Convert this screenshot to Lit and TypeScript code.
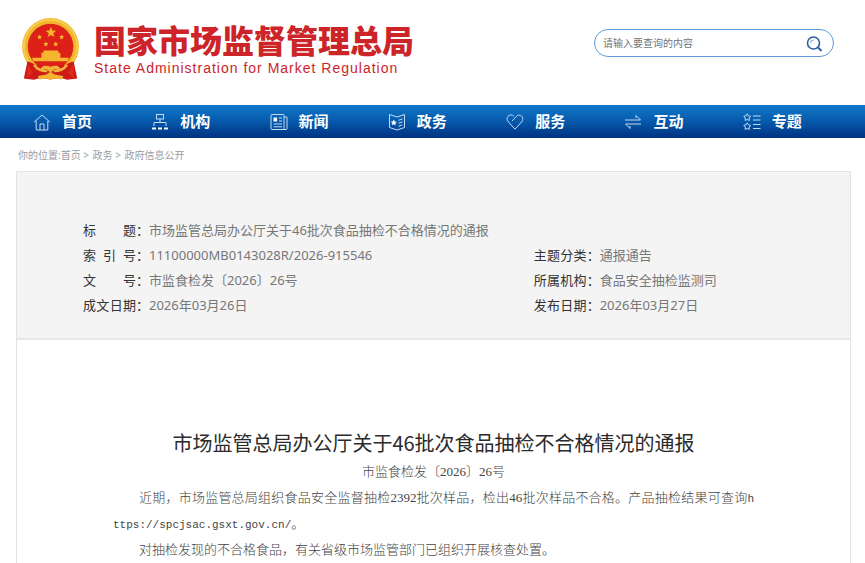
import { LitElement, html, css, svg, SVGTemplateResult } from "lit";
import { customElement, property } from "lit/decorators.js";

const star = svg`<path id="star" d="m4.200.8 1.200 2 2.200.5-1.500 1.800.2 2.300-2.100-.9-2.100.9.200-2.300L.800 3.300l2.200-.5z"/>`;

const icons: Record<string, SVGTemplateResult> = {
  home: svg`<path d="M1 9.2 9 2l8 7.2"/><path d="M3.2 8v9h11.6V8"/><path d="M7 17v-6h4v6"/>`,
  org: svg`<rect x="5.5" y="1.5" width="7" height="4.5"/><path d="M9 6v3.5M3 13V9.5h12V13"/><path d="M1 15.5h4M7 15.5h4M13 15.5h4" stroke="#fff" stroke-width="2"/>`,
  news: svg`<rect x="1" y="1.500" width="13" height="15" rx="1"/><path d="M14 4h3v11.500a1 1 0 0 1-1 1h-3"/><path d="M9 5h3M9 8h3M3.500 11h8.500M3.500 13.800h8.500"/><rect x="4" y="5" width="2.600" height="3" fill="#fff" stroke="#fff"/>`,
  policy: svg`<path d="M1.500 1.500 9 4l7.500-2.500v13L9 17l-7.500-2.500z"/><path d="m10.500 7.300 4-1.400M10.500 10.300l4-1.400M10.500 13.300l4-1.400"/><path d="m5.800 7 .8 1.700 1.800.2-1.300 1.200.3 1.800-1.600-.9-1.600.9.3-1.800-1.300-1.200 1.800-.2z" fill="#fff" stroke="#fff" stroke-width=".5"/>`,
  heart: svg`<path d="M6 8 9.800 4c2-2.600 5-2.200 6.300-.2 1.200 1.900.7 3.800-.6 5.200L9 16.200 2.400 9C.8 7.300.6 5 2 3.300c1.600-1.900 4.300-1.800 5.800-.2"/>`,
  exchange: svg`<path d="M1 7h15.500L12 2.500V5M17 11H1.500L6 15.500V13"/>`,
  topics: svg`${star}<g transform="translate(0 9)">${star}</g><path d="M10 3h7.500M10 7h7.500M10 11.500h7.500M10 15.500h7.500"/>`,
};

@customElement("nav-icon")
class NavIcon extends LitElement {
  @property() name = "home";
  static styles = css`
    :host { display: flex; color: #c3dcf5; }
    svg { width: 18px; height: 18px; fill: none; stroke: currentColor; stroke-width: 1; }
  `;
  render() {
    return html`<svg viewBox="0 0 18 18" aria-hidden="true">${icons[this.name]}</svg>`;
  }
}

@customElement("site-header")
class SiteHeader extends LitElement {
  static styles = css`
    :host {
      display: flex;
      align-items: flex-start;
      justify-content: space-between;
      padding: 17px 31px 0 20px;
      height: 88px;
    }
    .brand { display: flex; gap: 14px; color: #cd2429; text-decoration: none; }
    .emblem { width: 60px; height: 65px; flex: none; }
    .name {
      display: block;
      padding-top: 7px;
      font-size: 32px;
      line-height: 34px;
      font-weight: 900;
      white-space: nowrap;
    }
    .english {
      display: block;
      font: 14px/20px "Liberation Sans", Arial, sans-serif;
      letter-spacing: 1px;
      white-space: nowrap;
    }
    .search {
      display: flex;
      align-items: center;
      box-sizing: border-box;
      width: 240px;
      height: 28px;
      margin-top: 12px;
      padding: 0 8px;
      border: 1px solid #5c9bd6;
      border-radius: 14px;
    }
    input {
      flex: 1;
      min-width: 0;
      padding: 0;
      border: 0;
      outline: 0;
      background: none;
      font: inherit;
      font-size: 10px;
      color: #333;
    }
    input::placeholder { color: #757575; }
    button { display: flex; padding: 2px; border: 0; background: none; cursor: pointer; }
    .lens { width: 17px; height: 17px; fill: none; stroke: #2b5f9e; }
  `;
  render() {
    return html`
      <a class="brand" href="#">
        <svg class="emblem" viewBox="16 20 171 185" aria-hidden="true">
          <circle cx="103" cy="104" r="81" fill="#f0b62c" />
          <circle cx="103" cy="104" r="76" fill="none" stroke="#f9ce50" stroke-width="5" />
          <circle cx="103" cy="104" r="65" fill="#dd2119" />
          <g fill="#f6b52f">
            <path d="m104 48 4 10 11 1-8 7 3 11-10-6-9 6 3-11-9-7 11-1z" />
            <path d="m72 70 2 4 5 1-4 3 1 5-4-2-5 2 1-5-3-3 5-1zM135 70l2 4 5 1-4 3 1 5-4-2-5 2 1-5-3-3 5-1zM90 90l2 4 5 1-4 3 1 5-4-2-5 2 1-5-3-3 5-1zM118 90l2 4 5 1-4 3 1 5-4-2-5 2 1-5-3-3 5-1z" />
            <path d="M83 115h42v7h6v14H77v-14h6zM50 136h106l-4 10H54z" />
          </g>
          <path d="M37 147c15 2 21 12 37 11l29 11 29-11c16 1 22-9 37-11l10 48-29 4-19-6-28 5-28-5-19 6-29-4z" fill="#cd1a16" />
          <path d="M75 173c0-16 14-17 28-11 14-6 28-5 28 11l-16-5-12 11-12-11z" fill="#f2b13a" />
          <path d="M56 156c9 14 25 18 38 18M150 156c-9 14-25 18-38 18" fill="none" stroke="#efb439" stroke-width="7" />
          <path d="m67 188 24-4 12-8 12 8 24 4-4 10-19-3-13 4-13-4-19 3z" fill="#f5b330" />
          <path d="m38 154-2 40 17-15zM168 154l2 40-17-15z" fill="#e02a1d" />
        </svg>
        <span>
          <span class="name">国家市场监督管理总局</span>
          <span class="english">State Administration for Market Regulation</span>
        </span>
      </a>
      <form class="search" role="search" @submit=${(e: Event) => e.preventDefault()}>
        <input type="text" placeholder="请输入要查询的内容" aria-label="请输入要查询的内容" />
        <button aria-label="搜索">
          <svg class="lens" viewBox="0 0 17 17" aria-hidden="true">
            <circle cx="7.500" cy="8" r="6" stroke-width="1.600" />
            <path d="M4.500 8a3 3 0 0 1 3-3" stroke="#6d9dcb" />
            <path d="m12 12.500 3.500 3.500" stroke-width="2" />
          </svg>
        </button>
      </form>
    `;
  }
}

@customElement("main-nav")
class MainNav extends LitElement {
  private items = [
    ["home", "首页"],
    ["org", "机构"],
    ["news", "新闻"],
    ["policy", "政务"],
    ["heart", "服务"],
    ["exchange", "互动"],
    ["topics", "专题"],
  ];
  static styles = css`
    :host { display: block; }
    nav {
      display: grid;
      grid-template-columns: repeat(7, 1fr);
      padding: 0 4px 0 33px;
      background: linear-gradient(#1279ca, #0659ab 50%, #003282);
    }
    a {
      display: flex;
      align-items: center;
      gap: 11px;
      color: #fff;
      font-size: 15px;
      font-weight: 700;
      line-height: 33px;
      text-decoration: none;
    }
  `;
  render() {
    return html`<nav>
      ${this.items.map(([icon, text]) => html`<a href="#"><nav-icon name=${icon}></nav-icon>${text}</a>`)}
    </nav>`;
  }
}

@customElement("doc-meta")
class DocMeta extends LitElement {
  private rows = [
    ["标 题", "市场监管总局办公厅关于46批次食品抽检不合格情况的通报", "wide"],
    ["索 引 号", "11100000MB0143028R/2026-915546", ""],
    ["主题分类", "通报通告", ""],
    ["文 号", "市监食检发〔2026〕26号", ""],
    ["所属机构", "食品安全抽检监测司", ""],
    ["成文日期", "2026年03月26日", ""],
    ["发布日期", "2026年03月27日", ""],
  ];
  static styles = css`
    :host { display: block; background: #f4f4f4; border-bottom: 2px solid #e6e6e6; }
    dl {
      display: grid;
      grid-template-columns: 9fr 5fr;
      margin: 0;
      padding: 46px 66px 20px;
      font-size: 13px;
      line-height: 25px;
    }
    .row { display: flex; }
    .wide { grid-column: 1 / -1; }
    dt { display: flex; width: 66px; flex: none; color: #333; }
    .label { width: 53px; text-align: justify; text-align-last: justify; }
    dd { margin: 0; color: #777; }
  `;
  render() {
    return html`<dl>
      ${this.rows.map(
        ([label, value, cls]) => html`<div class="row ${cls}">
          <dt><span class="label">${label}</span>：</dt>
          <dd>${value}</dd>
        </div>`
      )}
    </dl>`;
  }
}

@customElement("app-root")
class AppRoot extends LitElement {
  static styles = css`
    :host {
      display: block;
      background: #fff;
      font-family: "Noto Sans", "Noto Sans CJK SC", sans-serif;
    }
    .crumbs { padding: 9px 18px 7px; font-size: 10px; line-height: 17px; color: #9a9ba6; }
    .crumbs a { color: inherit; text-decoration: none; }
    .crumbs a + a { margin-left: 1px; }
    .sheet { margin: 0 14px 0 16px; border: 1px solid #dfe4e5; border-bottom: 0; }
    article {
      padding: 87px 96px 20px;
      font: 13px/26px "Liberation Serif", "Noto Sans CJK SC", serif;
      font-weight: 300;
      color: #444;
    }
    h1 {
      margin: 0;
      font: 400 20px/32px "Noto Sans CJK SC", sans-serif;
      color: #2b2b2b;
      text-align: center;
    }
    p { margin: 0; text-indent: 26px; text-align: justify; }
    .number { text-indent: 0; text-align: center; }
    .url {
      font: 11px/16px "Liberation Mono", "Courier New", monospace;
      color: inherit;
      text-decoration: none;
    }
    .rest { white-space: nowrap; }
  `;
  render() {
    return html`
      <site-header></site-header>
      <main-nav></main-nav>
      <div class="crumbs">
        你的位置:<a href="#">首页</a> &gt; <a href="#">政务</a> &gt; <a href="#">政府信息公开</a>
      </div>
      <main class="sheet">
        <doc-meta></doc-meta>
        <article>
          <h1>市场监管总局办公厅关于46批次食品抽检不合格情况的通报</h1>
          <p class="number">市监食检发〔2026〕26号</p>
          <p>近期，市场监管总局组织食品安全监督抽检2392批次样品，检出46批次样品不合格。产品抽检结果可查询<a class="url" href="https://spcjsac.gsxt.gov.cn/">h<wbr /><span class="rest">ttps://spcjsac.gsxt.gov.cn/</span></a>。</p>
          <p>对抽检发现的不合格食品，有关省级市场监管部门已组织开展核查处置。</p>
        </article>
      </main>
    `;
  }
}
